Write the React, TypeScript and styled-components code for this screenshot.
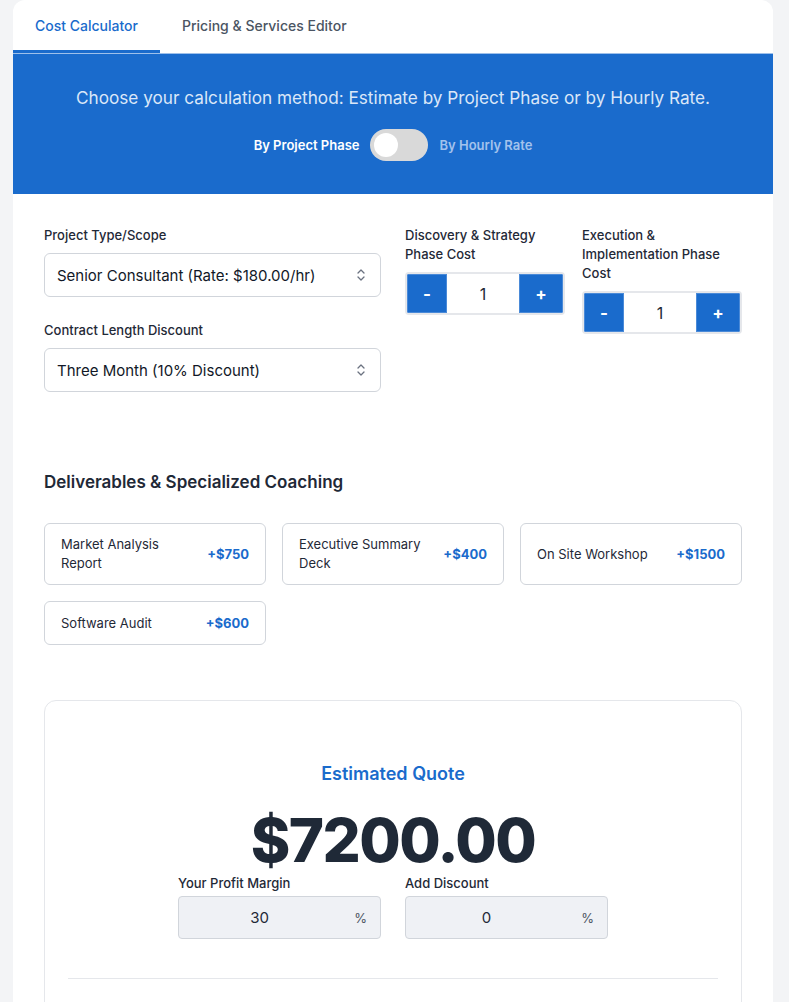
import React, { useState } from 'react';
import styled, { createGlobalStyle } from 'styled-components';

const GlobalStyle = createGlobalStyle`
  * { box-sizing: border-box; }
  body {
    margin: 0;
    background: #f3f4f6;
    font-family: Inter, 'Noto Sans', sans-serif;
    color: #1f2937;
  }
`;

const Card = styled.div`
  width: 760px;
  margin: 0 auto 0 13px;
  background: #ffffff;
  border-radius: 12px 12px 0 0;
  overflow: hidden;
`;

const TabBar = styled.div`
  display: flex;
  border-bottom: 1px solid #9ec0ea;
`;

const Tab = styled.button<{ active?: boolean }>`
  border: none;
  background: transparent;
  padding: 17px 22px 16px;
  font-family: inherit;
  font-size: 14px;
  font-weight: 500;
  color: ${p => (p.active ? '#1a6bcc' : '#4b5563')};
  border-bottom: 3px solid ${p => (p.active ? '#1a6bcc' : 'transparent')};
  cursor: pointer;
`;

const Banner = styled.div`
  background: #1a6bcc;
  padding: 33px 20px 33px;
  display: flex;
  flex-direction: column;
  align-items: center;
  gap: 21px;
`;

const BannerText = styled.p`
  margin: 0;
  font-size: 17.2px;
  color: #dbe7f8;
`;

const ToggleRow = styled.div`
  display: flex;
  align-items: center;
  gap: 11px;
`;

const ToggleLabel = styled.span<{ active?: boolean }>`
  font-size: 13px;
  font-weight: 600;
  color: ${p => (p.active ? '#ffffff' : '#a3c2ec')};
`;

const Track = styled.button<{ on: boolean }>`
  width: 58px;
  height: 32px;
  border-radius: 16px;
  border: none;
  padding: 4px;
  background: #d9d9d9;
  display: flex;
  justify-content: ${p => (p.on ? 'flex-end' : 'flex-start')};
  cursor: pointer;
`;

const Knob = styled.span`
  width: 24px;
  height: 24px;
  border-radius: 50%;
  background: #ffffff;
`;

const Body = styled.div`
  padding: 32px 31px 0;
`;

const TopGrid = styled.div`
  display: grid;
  grid-template-columns: 1fr 1fr;
  gap: 24px;
  align-items: start;
`;

const Column = styled.div`
  display: flex;
  flex-direction: column;
  gap: 24px;
`;

const StepperGrid = styled.div`
  display: grid;
  grid-template-columns: 1fr 1fr;
  gap: 17px;
  align-items: start;
`;

const Field = styled.div`
  display: flex;
  flex-direction: column;
  gap: 8px;
`;

const Label = styled.label`
  font-size: 13px;
  font-weight: 500;
  line-height: 19px;
  color: #1f2937;
`;

const SelectBox = styled.div`
  height: 44px;
  border: 1px solid #d1d5db;
  border-radius: 6px;
  padding: 0 14px 0 12px;
  display: flex;
  align-items: center;
  justify-content: space-between;
  font-size: 15px;
  color: #111827;
`;

const Stepper = styled.div`
  display: flex;
  align-items: stretch;
  height: 43px;
  border: 2px solid #e5e7eb;
  border-radius: 4px;
  overflow: hidden;
`;

const StepButton = styled.button<{ wide?: boolean }>`
  width: ${p => (p.wide ? '44px' : '40px')};
  border: 1px solid #4a8ad8;
  background: #1a6bcc;
  color: #ffffff;
  font-family: inherit;
  font-size: 17px;
  font-weight: 700;
  padding: 0;
  cursor: pointer;
`;

const StepValue = styled.div`
  flex: 1;
  display: flex;
  align-items: center;
  justify-content: center;
  font-size: 16px;
  color: #1f2937;
`;

const SectionTitle = styled.h3`
  margin: 80px 0 31px;
  font-size: 17px;
  font-weight: 600;
  color: #1f2937;
`;

const OptionGrid = styled.div`
  display: grid;
  grid-template-columns: repeat(3, 1fr);
  gap: 16px;
`;

const Option = styled.div`
  min-height: 44px;
  border: 1px solid #d1d5db;
  border-radius: 6px;
  padding: 11px 16px;
  display: flex;
  align-items: center;
  justify-content: space-between;
  gap: 12px;
`;

const OptionName = styled.span`
  font-size: 13px;
  line-height: 19px;
  color: #1f2937;
`;

const OptionPrice = styled.span`
  font-size: 13px;
  font-weight: 700;
  color: #1a6bcc;
  white-space: nowrap;
`;

const QuoteBox = styled.div`
  margin-top: 55px;
  border: 1px solid #e5e7eb;
  border-radius: 12px;
  padding: 62px 23px 0;
  display: flex;
  flex-direction: column;
  align-items: center;
  height: 320px;
`;

const QuoteTitle = styled.h2`
  margin: 0;
  font-size: 18px;
  font-weight: 600;
  color: #1a6bcc;
`;

const Amount = styled.div`
  margin-top: 25px;
  font-size: 60px;
  font-weight: 800;
  line-height: 62px;
  letter-spacing: -1.5px;
  color: #1f2937;
`;

const AdjustGrid = styled.div`
  display: grid;
  grid-template-columns: 203px 203px;
  gap: 24px;
  margin-top: 3px;
`;

const AdjustField = styled.div`
  display: flex;
  flex-direction: column;
  gap: 3px;
`;

const PercentInput = styled.div`
  position: relative;
  height: 43px;
  background: #eff1f5;
  border: 1px solid #d1d5db;
  border-radius: 4px;
  display: flex;
  align-items: center;
  justify-content: center;
  padding-right: 40px;
  font-size: 15px;
  color: #1f2937;
`;

const Suffix = styled.span`
  position: absolute;
  right: 13px;
  font-size: 13px;
  color: #4b5563;
`;

const Divider = styled.hr`
  align-self: stretch;
  margin: 39px 0 0;
  border: none;
  border-top: 1px solid #e5e7eb;
`;

const Chevrons = () => (
  <svg width="10" height="14" viewBox="0 0 10 14" fill="none" stroke="#6b7280" strokeWidth="1.3" strokeLinecap="round" strokeLinejoin="round">
    <path d="M2 5l3-3 3 3" />
    <path d="M2 9l3 3 3-3" />
  </svg>
);

const options = [
  { name: 'Market Analysis Report', price: '+$750' },
  { name: 'Executive Summary Deck', price: '+$400' },
  { name: 'On Site Workshop', price: '+$1500' },
  { name: 'Software Audit', price: '+$600' },
];

const PhaseStepper: React.FC<{ label: React.ReactNode }> = ({ label }) => {
  const [value, setValue] = useState(1);
  return (
    <Field>
      <Label>{label}</Label>
      <Stepper>
        <StepButton onClick={() => setValue(v => Math.max(0, v - 1))}>-</StepButton>
        <StepValue>{value}</StepValue>
        <StepButton wide onClick={() => setValue(v => v + 1)}>+</StepButton>
      </Stepper>
    </Field>
  );
};

export default function App() {
  const [hourly, setHourly] = useState(false);
  return (
    <>
      <GlobalStyle />
      <Card>
        <TabBar>
          <Tab active>Cost Calculator</Tab>
          <Tab>Pricing &amp; Services Editor</Tab>
        </TabBar>
        <Banner>
          <BannerText>Choose your calculation method: Estimate by Project Phase or by Hourly Rate.</BannerText>
          <ToggleRow>
            <ToggleLabel active={!hourly}>By Project Phase</ToggleLabel>
            <Track on={hourly} onClick={() => setHourly(h => !h)}>
              <Knob />
            </Track>
            <ToggleLabel active={hourly}>By Hourly Rate</ToggleLabel>
          </ToggleRow>
        </Banner>
        <Body>
          <TopGrid>
            <Column>
              <Field>
                <Label>Project Type/Scope</Label>
                <SelectBox>
                  <span>Senior Consultant (Rate: $180.00/hr)</span>
                  <Chevrons />
                </SelectBox>
              </Field>
              <Field>
                <Label>Contract Length Discount</Label>
                <SelectBox>
                  <span>Three Month (10% Discount)</span>
                  <Chevrons />
                </SelectBox>
              </Field>
            </Column>
            <StepperGrid>
              <PhaseStepper label={<>Discovery &amp; Strategy<br />Phase Cost</>} />
              <PhaseStepper label={<>Execution &amp;<br />Implementation Phase<br />Cost</>} />
            </StepperGrid>
          </TopGrid>

          <SectionTitle>Deliverables &amp; Specialized Coaching</SectionTitle>
          <OptionGrid>
            {options.map(o => (
              <Option key={o.name}>
                <OptionName>{o.name}</OptionName>
                <OptionPrice>{o.price}</OptionPrice>
              </Option>
            ))}
          </OptionGrid>

          <QuoteBox>
            <QuoteTitle>Estimated Quote</QuoteTitle>
            <Amount>$7200.00</Amount>
            <AdjustGrid>
              <AdjustField>
                <Label>Your Profit Margin</Label>
                <PercentInput>
                  30<Suffix>%</Suffix>
                </PercentInput>
              </AdjustField>
              <AdjustField>
                <Label>Add Discount</Label>
                <PercentInput>
                  0<Suffix>%</Suffix>
                </PercentInput>
              </AdjustField>
            </AdjustGrid>
            <Divider />
          </QuoteBox>
        </Body>
      </Card>
    </>
  );
}
